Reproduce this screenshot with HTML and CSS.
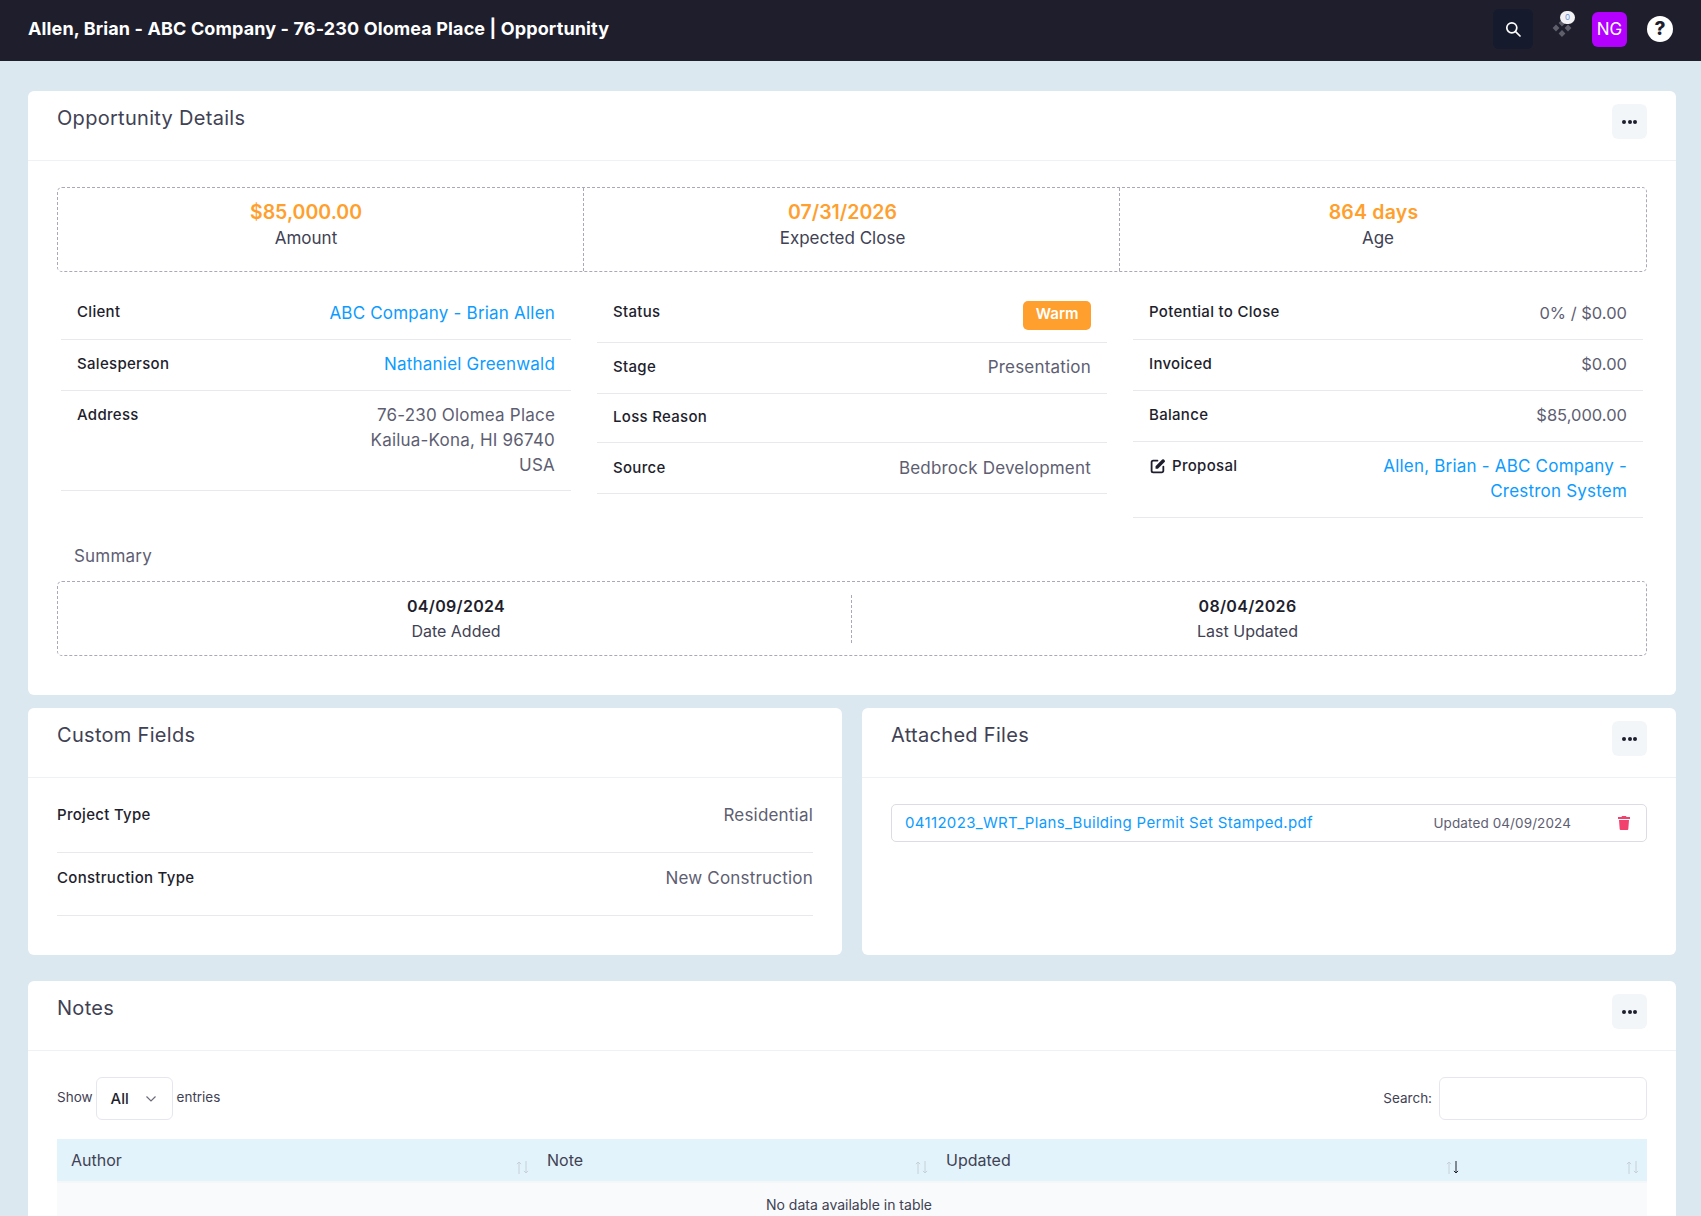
FILE: index.html
```html
<!DOCTYPE html>
<html lang="en">
<head>
<meta charset="utf-8">
<title>Opportunity</title>
<link rel="stylesheet" href="styles.css">
</head>
<body>
<header class="topbar">
  <h1 class="page-title">Allen, Brian - ABC Company - 76-230 Olomea Place | Opportunity</h1>
  <div class="top-actions">
    <button class="search-btn" aria-label="Search">
      <svg width="16" height="16" viewBox="0 0 16 16" fill="none" stroke="#fff" stroke-width="1.7"><circle cx="6.8" cy="6.8" r="5"/><path d="M10.6 10.6 15 15" stroke-linecap="round"/></svg>
    </button>
    <div class="notif">
      <svg width="20" height="19" viewBox="0 0 20 19" fill="#5f5f6c"><path d="M10 .6l3.400 3.400L10 7.400 6.600 4zM4 5.600L7.400 9 4 12.400.6 9zM16 5.600L19.400 9 16 12.400 12.600 9zM10 11.100l3.400 3.400L10 17.900l-3.400-3.400z"/></svg>
      <span class="notif-count">0</span>
    </div>
    <div class="avatar">NG</div>
    <div class="help">?</div>
  </div>
</header>

<main class="page">
  <section class="card">
    <div class="card-head">
      <h2 class="card-title">Opportunity Details</h2>
      <button class="dots" aria-label="More"><i></i><i></i><i></i></button>
    </div>
    <div class="card-body details-body">
      <div class="stats">
        <div class="stat stat-a"><div class="stat-value">$85,000.00</div><div class="stat-label">Amount</div></div>
        <div class="stat stat-b"><div class="stat-value">07/31/2026</div><div class="stat-label">Expected Close</div></div>
        <div class="stat stat-c"><div class="stat-value stat-value-age">864 days</div><div class="stat-label">Age</div></div>
      </div>

      <div class="info-grid">
        <div class="info-col">
          <div class="info-row"><span class="k">Client</span><a class="v link">ABC Company - Brian Allen</a></div>
          <div class="info-row"><span class="k">Salesperson</span><a class="v link">Nathaniel Greenwald</a></div>
          <div class="info-row"><span class="k">Address</span><span class="v">76-230 Olomea Place<br>Kailua-Kona, HI 96740<br>USA</span></div>
        </div>
        <div class="info-col col-mid">
          <div class="info-row row-status"><span class="k">Status</span><span class="badge">Warm</span></div>
          <div class="info-row"><span class="k">Stage</span><span class="v">Presentation</span></div>
          <div class="info-row row-loss"><span class="k">Loss Reason</span></div>
          <div class="info-row row-source"><span class="k">Source</span><span class="v">Bedbrock Development</span></div>
        </div>
        <div class="info-col">
          <div class="info-row"><span class="k">Potential to Close</span><span class="v v-num">0% / $0.00</span></div>
          <div class="info-row"><span class="k">Invoiced</span><span class="v v-num">$0.00</span></div>
          <div class="info-row"><span class="k">Balance</span><span class="v v-num">$85,000.00</span></div>
          <div class="info-row row-proposal"><span class="k k-icon">
            <svg width="16" height="16" viewBox="0 0 15 15" fill="none"><path d="M7 2.400H3a1.500 1.500 0 0 0-1.500 1.500V12A1.500 1.500 0 0 0 3 13.500h8A1.500 1.500 0 0 0 12.500 12V8" stroke="#1e1e2d" stroke-width="1.700" stroke-linecap="round"/><path d="M5.200 7.800 11.400 1.500a1.200 1.200 0 0 1 1.700 0l.6.6a1.200 1.200 0 0 1 0 1.700L7.400 10H5.200z" fill="#1e1e2d"/></svg>
            Proposal</span><a class="v link">Allen, Brian - ABC Company -<br>Crestron System</a></div>
        </div>
      </div>

      <div class="summary-label">Summary</div>
      <div class="summary">
        <div class="sum-item sum-first"><div class="sum-value">04/09/2024</div><div class="sum-label">Date Added</div></div>
        <div class="sum-sep"></div>
        <div class="sum-item sum-last"><div class="sum-value">08/04/2026</div><div class="sum-label">Last Updated</div></div>
      </div>
    </div>
  </section>

  <div class="two-up">
    <section class="card">
      <div class="card-head"><h2 class="card-title">Custom Fields</h2></div>
      <div class="card-body fields-body">
        <div class="field-row"><span class="k">Project Type</span><span class="v">Residential</span></div>
        <div class="field-row"><span class="k">Construction Type</span><span class="v">New Construction</span></div>
      </div>
    </section>
    <section class="card">
      <div class="card-head">
        <h2 class="card-title">Attached Files</h2>
        <button class="dots" aria-label="More"><i></i><i></i><i></i></button>
      </div>
      <div class="card-body">
        <div class="file">
          <a class="file-name">04112023_WRT_Plans_Building Permit Set Stamped.pdf</a>
          <span class="file-date">Updated 04/09/2024</span>
          <svg class="trash" width="12" height="14" viewBox="0 0 12 14" fill="#f1416c"><path d="M4 0h4l.5 1H12v2H0V1h3.500zM1 4h10l-.7 9a1 1 0 0 1-1 1H2.700a1 1 0 0 1-1-1z"/></svg>
        </div>
      </div>
    </section>
  </div>

  <section class="card">
    <div class="card-head">
      <h2 class="card-title">Notes</h2>
      <button class="dots" aria-label="More"><i></i><i></i><i></i></button>
    </div>
    <div class="card-body">
      <div class="table-tools">
        <div class="show"><span class="tool-text">Show</span>
          <div class="select">All
            <svg width="12" height="8" viewBox="0 0 12 8" fill="none" stroke="#6b6b7b" stroke-width="1.200"><path d="M1.500 1.500 6 6l4.500-4.500"/></svg>
          </div>
          <span class="tool-text">entries</span></div>
        <div class="search"><span class="search-text">Search:</span><div class="search-input"></div></div>
      </div>
      <table class="notes">
        <thead>
          <tr>
            <th class="th-author">Author<svg class="sort" width="13" height="13" viewBox="0 0 13 13" fill="none" stroke-width="1"><path class="up" d="M3 13V1M.9 3.100 3 1l2.100 2.100"/><path class="down" d="M10 0v12M7.900 9.900 10 12l2.100-2.100"/></svg></th>
            <th class="th-note">Note<svg class="sort" width="13" height="13" viewBox="0 0 13 13" fill="none" stroke-width="1"><path class="up" d="M3 13V1M.9 3.100 3 1l2.100 2.100"/><path class="down" d="M10 0v12M7.900 9.900 10 12l2.100-2.100"/></svg></th>
            <th class="th-updated">Updated<svg class="sort sort-active" width="13" height="13" viewBox="0 0 13 13" fill="none" stroke-width="1"><path class="up" d="M3 13V1M.9 3.100 3 1l2.100 2.100"/><path class="down" d="M10 0v12M7.900 9.900 10 12l2.100-2.100"/></svg></th>
            <th class="th-end"><svg class="sort" width="13" height="13" viewBox="0 0 13 13" fill="none" stroke-width="1"><path class="up" d="M3 13V1M.9 3.100 3 1l2.100 2.100"/><path class="down" d="M10 0v12M7.900 9.900 10 12l2.100-2.100"/></svg></th>
          </tr>
        </thead>
        <tbody><tr><td colspan="4">No data available in table</td></tr></tbody>
      </table>
    </div>
  </section>
</main>
</body>
</html>
```
FILE: styles.css
```css
* { box-sizing: border-box; }
html, body { margin: 0; height: 1216px; overflow: hidden; }
body {
  background: #dbe8f0;
  font-family: Inter, "Noto Sans", "Liberation Sans", sans-serif;
  color: #1e1e2d;
}
a { text-decoration: none; }

.topbar {
  height: 61px;
  background: #1e1e2d;
  display: flex;
  align-items: center;
  justify-content: space-between;
  padding: 0 28px 4px 28px;
}
.page-title { margin: 0; font-size: 18px; font-weight: 700; color: #fff; letter-spacing: .12px; }
.top-actions { display: flex; align-items: center; }
.search-btn {
  width: 40px; height: 40px; border: 0; border-radius: 6px; background: #151a2d;
  display: flex; align-items: center; justify-content: center; padding: 0;
  margin-right: 19px; margin-top: 1px;
}
.notif { position: relative; width: 40px; height: 24px; margin-top: 5px; }
.notif-count {
  position: absolute; left: 8px; top: -8px; width: 15px; height: 13px; border-radius: 7px;
  background: #f2f2f5; color: #6c8fd8; font-size: 8px; line-height: 13px; text-align: center;
}
.avatar {
  width: 35px; height: 35px; border-radius: 6px; background: #b300ff; color: #fff;
  font-size: 17px; line-height: 35px; text-align: center; margin-top: 1px;
}
.help {
  width: 26px; height: 26px; border-radius: 50%; background: #fff; color: #1e1e2d;
  font-size: 19px; font-weight: 800; line-height: 26px; text-align: center;
  margin-left: 20px; margin-top: 1px;
}

.page { padding: 30px 25px 0 28px; display: flex; flex-direction: column; }
.card { background: #fff; border-radius: 6px; }
.card-head {
  height: 70px; border-bottom: 1px solid #eff2f5; padding: 13px 29px 0;
  display: flex; justify-content: space-between; align-items: flex-start;
}
.card-title { margin: 0; font-size: 20px; line-height: 28px; font-weight: 400; color: #3f4254; letter-spacing: .3px; }
.dots {
  width: 35px; height: 35px; border: 0; padding: 0; border-radius: 6px; background: #f3f6f9;
  display: flex; align-items: center; justify-content: center; gap: 1.500px;
}
.dots i { width: 4px; height: 4px; border-radius: 50%; background: #1e1e2d; }
.card-body { padding: 26px 29px; }
.details-body { height: 534px; }

.stats { display: flex; height: 85px; border: 1px dashed #a9a9b8; border-radius: 5px; }
.stat { text-align: center; padding-top: 11px; }
.stat + .stat { border-left: 1px dashed #a9a9b8; }
.stat-a { width: 525px; padding-right: 29px; }
.stat-b { width: 536px; padding-right: 18px; }
.stat-c { flex: 1; padding-right: 10px; }
.stat-value { font-size: 19.500px; line-height: 26px; font-weight: 600; color: #ff9f2e; }
.stat-value-age { margin-right: 9px; letter-spacing: .2px; }
.stat-label { font-size: 17px; line-height: 26px; color: #3f4254; }

.info-grid { display: grid; grid-template-columns: repeat(3, 1fr); gap: 26px; padding: 0 4px; margin-top: 17px; }
.info-row {
  display: flex; justify-content: space-between; align-items: flex-start;
  padding: 13px 16px 12px; border-bottom: 1px solid #e8e9ec; line-height: 25px; min-height: 51px;
}
.k { font-size: 15px; font-weight: 450; color: #1e1e2d; letter-spacing: .3px; margin-top: -2px; }
.info-row:first-child .k { margin-top: -3px; }
.v { font-size: 17px; color: #5e5e72; text-align: right; letter-spacing: .2px; margin-top: -1px; }
.v-num { font-size: 16.500px; letter-spacing: 0; }
.link { color: #0d9bff; }
.row-status { height: 54px; padding-top: 11px; align-items: center; padding-bottom: 11px; }
.info-row.row-status .k { margin-top: -8px; }
.row-loss { min-height: 49px; height: 49px; padding-top: 12px; padding-bottom: 11px; }
.row-source .k { margin-top: -1px; }
.row-source .v { margin-top: 0; }
.badge {
  background: #ff9f2e; color: #fff; font-size: 15px; font-weight: 600;
  padding: 0 12.500px; height: 29px; line-height: 26px; border-radius: 5px;
}
.k-icon { display: inline-flex; align-items: center; gap: 6px; }
.k-icon svg { margin-left: 1px; }
.row-proposal { min-height: 76px; }

.summary-label { font-size: 17px; line-height: 24px; color: #5e5e72; margin: 26px 0 13px 17px; letter-spacing: .2px; }
.summary { display: flex; align-items: center; height: 75px; border: 1px dashed #a9a9b8; border-radius: 5px; }
.sum-item { text-align: center; }
.sum-first { flex: 0 0 793px; padding-left: 3px; }
.sum-last { flex: 1; padding-right: 3px; }
.sum-sep { height: 48px; border-left: 1px dashed #a9a9b8; }
.sum-value { font-size: 16px; line-height: 25px; font-weight: 600; color: #1e1e2d; letter-spacing: .3px; }
.sum-label { font-size: 16px; line-height: 25px; color: #3f4254; }

.two-up { display: grid; grid-template-columns: 814px 814px; gap: 20px; margin: 13px 0 26px; height: 247px; }
.fields-body { padding-top: 12px; }
.field-row {
  display: flex; justify-content: space-between; align-items: center; height: 63px;
  border-bottom: 1px solid #e8e9ec; padding-bottom: 13px;
}
.field-row .k, .field-row .v { margin-top: 0; }
.file {
  display: flex; align-items: center; height: 38px; border: 1px solid #dcdde2; border-radius: 5px;
  padding: 0 16px 1px 13px;
}
.file-name { font-size: 15px; color: #0d9bff; flex: 1; letter-spacing: .33px; }
.file-date { font-size: 13.500px; color: #5e5e72; margin-right: 47px; letter-spacing: .1px; }

.table-tools { display: flex; justify-content: space-between; font-size: 13.500px; color: #3f4254; }
.show, .search { display: flex; align-items: center; }
.tool-text { margin-top: -4px; }
.select {
  width: 77px; height: 43px; border: 1px solid #e6e6ef; border-radius: 6px; margin: 0 4px 0 3px;
  padding: 0 15px 0 14px; display: flex; align-items: center; justify-content: space-between;
  font-size: 15px; font-weight: 500; color: #1e1e2d;
}
.search-text { margin-top: -1px; }
.search-input { width: 208px; height: 43px; border: 1px solid #e6e6ef; border-radius: 6px; margin-left: 7px; }

.notes { width: 100%; border-collapse: separate; border-spacing: 0; margin-top: 19px; table-layout: fixed; }
.notes th {
  position: relative; height: 44px; background: #e3f3fb; font-size: 16px; font-weight: 400;
  color: #3f4254; text-align: left; padding: 0 14px; border-bottom: 2px solid #f4f6f8;
}
.th-author { width: 476px; }
.th-note { width: 399px; }
.th-updated { width: 531px; }
.sort { position: absolute; right: 4px; top: 22px; }
.th-updated .sort { right: 4px; }
.th-end .sort { right: 8px; }
.sort path { stroke: #c5d0d8; }
.sort-active .down { stroke: #1e1e2d; }
.notes td { background: #f9fafb; height: 44px; text-align: center; font-size: 14px; color: #3f4254; padding: 0 6px 2px 0; }
```
